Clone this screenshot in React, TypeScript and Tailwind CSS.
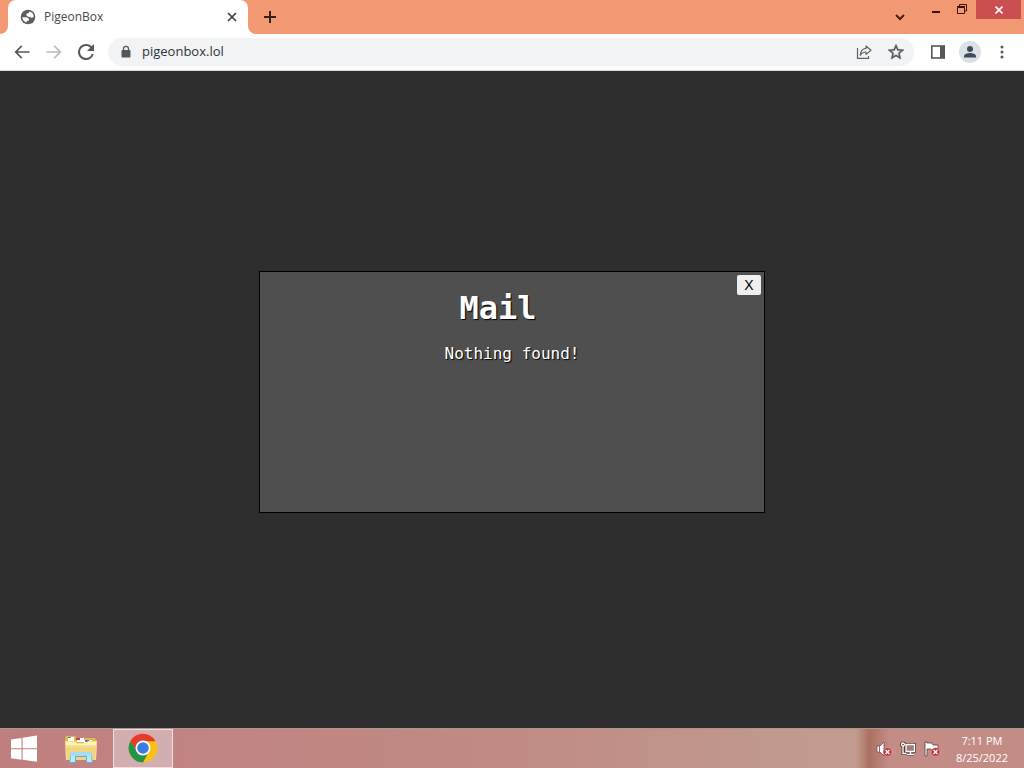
import React from "react";

const iconButton = "flex shrink-0 items-center justify-center";

function TabStrip() {
  return (
    <header className="flex h-[34px] items-start bg-[#f29973] pl-2">
      <div className="relative flex h-[34px] w-60 items-center rounded-t-lg bg-white pr-2 pl-3">
        <svg className="absolute bottom-0 -left-2 size-2" viewBox="0 0 8 8" fill="#fff" aria-hidden="true">
          <path d="M8 0v8H0a8 8 0 0 0 8-8z" />
        </svg>
        <svg className="absolute -right-2 bottom-0 size-2" viewBox="0 0 8 8" fill="#fff" aria-hidden="true">
          <path d="M0 0v8h8a8 8 0 0 1-8-8z" />
        </svg>
        <svg className="size-4" viewBox="0 0 16 16" aria-hidden="true">
          <circle cx="8" cy="8" r="7.300" fill="#5a5e62" />
          <path d="M2.300 8.300h3.500c2.400 0 3.500 1.200 3.200 3.500H6.700v1.700C4 13 2.300 10.800 2.300 8.300z" fill="#fff" />
          <path d="M9.500 2.500c2.600.7 4.200 2.800 4.300 5.300-.7 1-1.700 1.200-2.600.9C10.500 7.500 9.300 8 8.200 7.700 6.800 7.200 6 6 6.400 5.200c.6-1 1.700-.6 2.300-1.100z" fill="#fff" />
        </svg>
        <span className="ml-2 flex-1 text-xs text-[#45494d]">PigeonBox</span>
        <button type="button" aria-label="Close tab" className={`${iconButton} size-4`}>
          <svg className="size-2.5" viewBox="0 0 10 10" stroke="#3c4043" strokeWidth="1.7" aria-hidden="true">
            <path d="M1 1l8 8M9 1l-8 8" />
          </svg>
        </button>
      </div>
      <button type="button" aria-label="New tab" className={`${iconButton} ml-2 h-[34px] w-7`}>
        <svg className="size-3" viewBox="0 0 12 12" stroke="#35221b" strokeWidth="2" aria-hidden="true">
          <path d="M6 0v12M0 6h12" />
        </svg>
      </button>
      <div className="ml-auto flex items-start pr-[3px]">
        <button type="button" aria-label="Search tabs" className={`${iconButton} mr-3 h-[34px] w-6`}>
          <svg className="size-2.5" viewBox="0 0 10 10" fill="none" stroke="#4a1d12" strokeWidth="2" aria-hidden="true">
            <path d="M1 3l4 4 4-4" />
          </svg>
        </button>
        <button type="button" aria-label="Minimize" className={`${iconButton} h-5 w-[26px]`}>
          <svg className="size-3" viewBox="0 0 12 12" fill="#3b1509" aria-hidden="true">
            <path d="M1 7h8v2H1z" />
          </svg>
        </button>
        <button type="button" aria-label="Restore" className={`${iconButton} h-5 w-[26px]`}>
          <svg className="size-3" viewBox="0 0 12 12" fill="none" stroke="#3b1509" aria-hidden="true">
            <path d="M.5 3.500h7v6h-7zM0 2.500h8M2.500 2V.500h7v6.500H8" />
          </svg>
        </button>
        <button type="button" aria-label="Close window" className={`${iconButton} h-[19px] w-[45px] bg-[#cb4f50]`}>
          <svg className="size-2" viewBox="0 0 8 8" stroke="#fff" strokeWidth="1.600" aria-hidden="true">
            <path d="M.5.5l7 7M7.500.5l-7 7" />
          </svg>
        </button>
      </div>
    </header>
  );
}

function Toolbar() {
  return (
    <nav className="flex h-[37px] items-center border-b border-[#d5d7d9] bg-white pr-1.5 pl-1.5">
      <button type="button" aria-label="Back" className={`${iconButton} size-8`}>
        <svg className="size-5" viewBox="0 0 24 24" fill="#54585c" aria-hidden="true">
          <path d="M21 11H6.800l5.600-5.600L11 4l-8 8 8 8 1.400-1.400L6.800 13H21z" />
        </svg>
      </button>
      <button type="button" aria-label="Forward" className={`${iconButton} size-8`}>
        <svg className="size-5" viewBox="0 0 24 24" fill="#bbbdbf" aria-hidden="true">
          <path d="M3 11h14.200l-5.600-5.600L13 4l8 8-8 8-1.400-1.400 5.600-5.600H3z" />
        </svg>
      </button>
      <button type="button" aria-label="Reload" className={`${iconButton} size-8`}>
        <svg className="size-4" viewBox="4 4 16 16" fill="#54585c" aria-hidden="true">
          <path d="M17.650 6.350A7.958 7.958 0 0 0 12 4a8 8 0 1 0 7.730 10h-2.080A5.990 5.990 0 0 1 12 18a6 6 0 1 1 0-12c1.660 0 3.140.69 4.220 1.780L13 11h7V4z" />
        </svg>
      </button>
      <div className="ml-1.5 flex h-7 flex-1 items-center rounded-full bg-[#f1f3f4] pr-0.5 pl-3">
        <svg className="h-3.5 w-3" viewBox="0 0 12 14" aria-hidden="true">
          <rect x="1.500" y="5" width="9" height="7.500" rx="1" fill="#54585c" />
          <path d="M3.500 6V3.800a2.500 2.500 0 0 1 5 0V6" fill="none" stroke="#54585c" strokeWidth="1.300" />
        </svg>
        <input
          type="text"
          aria-label="Address"
          defaultValue="pigeonbox.lol"
          className="ml-2.5 min-w-0 flex-1 bg-transparent text-[13px] text-[#303438] outline-none"
        />
        <button type="button" aria-label="Share" className={`${iconButton} size-8`}>
          <svg className="size-4" viewBox="0 0 16 16" fill="none" stroke="#5f6368" strokeWidth="1.200" strokeLinejoin="round" aria-hidden="true">
            <path d="M1.500 4v10.400h11V12" />
            <path d="M10 2l5 4.200-5 4.200V8C7.500 8 5.500 9 4.300 11.300 4.500 7.500 6.500 4.800 10 4.400z" />
          </svg>
        </button>
        <button type="button" aria-label="Bookmark" className={`${iconButton} size-8`}>
          <svg className="size-4" viewBox="2 2 20 20" fill="#54585c" stroke="#54585c" strokeWidth=".5" aria-hidden="true">
            <path d="M22 9.240l-7.190-.62L12 2 9.190 8.630 2 9.240l5.460 4.730L5.820 21 12 17.270 18.180 21l-1.630-7.030L22 9.240zM12 15.400l-3.760 2.270 1-4.280-3.320-2.880 4.380-.38L12 6.100l1.710 4.040 4.380.38-3.320 2.880 1 4.280L12 15.400z" />
          </svg>
        </button>
      </div>
      <button type="button" aria-label="Side panel" className={`${iconButton} ml-2 size-8`}>
        <svg className="size-3.5" viewBox="0 0 14 14" aria-hidden="true">
          <rect x=".8" y="1" width="12.400" height="12" fill="#fff" stroke="#54585c" strokeWidth="1.600" />
          <path d="M9 1h4v12H9z" fill="#54585c" />
        </svg>
      </button>
      <button type="button" aria-label="Profile" className={`${iconButton} size-8`}>
        <svg className="size-[22px]" viewBox="0 0 22 22" aria-hidden="true">
          <circle cx="11" cy="11" r="11" fill="#dce1e6" />
          <circle cx="11" cy="8" r="3" fill="#3f4b57" />
          <path d="M5 16.500v-1.200c0-2.300 3.600-3.300 6-3.300s6 1 6 3.300v1.200z" fill="#3f4b57" />
        </svg>
      </button>
      <button type="button" aria-label="Menu" className={`${iconButton} size-8`}>
        <svg className="h-3.5 w-1" viewBox="0 0 4 14" fill="#54585c" aria-hidden="true">
          <circle cx="2" cy="2" r="1.500" />
          <circle cx="2" cy="7" r="1.500" />
          <circle cx="2" cy="12" r="1.500" />
        </svg>
      </button>
    </nav>
  );
}

function MailPanel() {
  return (
    <section className="relative flex h-[242px] w-[506px] max-w-full flex-col items-center border border-black bg-[#4f4f4f] pt-[18px] font-['DejaVu_Sans_Mono',monospace] text-white [text-shadow:1px_1px_1px_#000]">
      <button
        type="button"
        aria-label="Close mail"
        className="absolute top-[3px] right-[3px] flex h-5 w-6 items-center justify-center rounded-xs bg-[#efefef] font-['Liberation_Sans',sans-serif] text-sm text-black [text-shadow:none]"
      >
        X
      </button>
      <h1 className="pr-7 text-[32px] leading-9 font-bold">Mail</h1>
      <p className="mt-4 text-base leading-6">Nothing found!</p>
    </section>
  );
}

function ErrorBadge() {
  return (
    <g>
      <circle cx="11.500" cy="11" r="4.300" fill="#c8323c" stroke="#e5a5a3" strokeWidth=".5" />
      <path d="M9.600 9.100l3.800 3.800M13.400 9.100l-3.800 3.800" stroke="#fff" strokeWidth="1.400" />
    </g>
  );
}

function Taskbar() {
  return (
    <footer className="flex h-10 items-stretch border-t border-[#ad9690] bg-linear-to-r from-[#c07f7f] via-[#c08b85] to-[#c19b8e] to-80%">
      <button type="button" aria-label="Start" className={`${iconButton} w-12`}>
        <svg className="size-7" viewBox="0 0 28 28" fill="#fff" aria-hidden="true">
          <path d="M1 4.600l10.500-1.700v10.300H1zM12.600 2.700L27 .5v12.700H12.600zM1 14.300h10.500v10.400L1 23.200zM12.600 14.300H27v12.500l-14.400-2z" />
        </svg>
      </button>
      <button type="button" aria-label="File Explorer" className={`${iconButton} ml-[3px] w-[60px]`}>
        <svg className="h-[30px] w-[34px]" viewBox="0 0 34 30" aria-hidden="true">
          <path d="M1 4l1-2h9l2 2h18l2 3-1 19H2z" fill="#ddb75c" />
          <path d="M4 3h6v4H4zM13 4h7v4h-7zM20 6h8v4h-8z" fill="#fff" />
          <path d="M4 3h3v1H4z" fill="#49a354" />
          <path d="M12 4h4v2h-4z" fill="#c24a3e" />
          <path d="M21 6h4v2h-4z" fill="#4281bd" />
          <path d="M1 7h10l3 2h8l2-2h9l-1 19H2z" fill="#f6df91" />
          <path d="M2 13h30l-1 13H3z" fill="#f0d680" />
          <path d="M2 8h8l3 2h9l3-2h7v3H2z" fill="#fff2b4" />
          <path d="M5 29l2-11h20l2 11h-7v-6H12v6z" fill="#62ade0" />
          <path d="M7 18h20l1 4H6z" fill="#a7dcf2" />
          <path d="M6 28l1-6h4v6zM23 28v-6h4l1 6z" fill="#bce9f8" />
        </svg>
      </button>
      <button type="button" aria-label="Google Chrome" className={`${iconButton} ml-0.5 w-[60px] border border-[#f0dfde] bg-[#d2aeb0] pb-0.5`}>
        <svg className="size-[30px]" viewBox="0 0 48 48" aria-hidden="true">
          <circle cx="24" cy="24" r="23" fill="#fbc116" />
          <path d="M24 13h19.920A23 23 0 0 0 4.080 12.500L14.470 29.500 24 13z" fill="#e33b2e" />
          <path d="M4.080 12.500A23 23 0 0 0 24 47l9.530-17.500L24 35l-9.530-5.500z" fill="#269447" />
          <circle cx="24" cy="24" r="12" fill="#fff" />
          <circle cx="24" cy="24" r="9.300" fill="#397de2" />
        </svg>
      </button>
      <div className="ml-auto flex items-center bg-linear-to-r from-[#b07769]/0 via-[#ab7060] via-8% to-[#c38c86] to-20% pr-4 pl-4">
        <button type="button" aria-label="Volume muted" className={`${iconButton} w-6`}>
          <svg className="size-4" viewBox="0 0 16 16" aria-hidden="true">
            <path d="M1 5h3l4-4v14l-4-4H1z" fill="#fff" stroke="#66443f" strokeWidth=".7" />
            <path d="M3.500 5v6" stroke="#8d6b64" />
            <ErrorBadge />
          </svg>
        </button>
        <button type="button" aria-label="Network" className={`${iconButton} w-6`}>
          <svg className="size-4" viewBox="0 0 16 16" fill="none" aria-hidden="true">
            <g stroke="#543b36" strokeWidth="3">
              <path d="M6 3.500h8.500v7H6zM10.500 10.500v3M7 13.500h7M3 5v7.500h3" />
              <circle cx="3" cy="3.500" r="1.500" />
            </g>
            <path d="M6 3.500h8.500v7H6z" fill="#a17c75" />
            <g stroke="#fff" strokeWidth="1.300">
              <path d="M6 3.500h8.500v7H6zM10.500 10.500v3M7 13.500h7M3 5v7.500h3" />
              <circle cx="3" cy="3.500" r="1.500" />
            </g>
          </svg>
        </button>
        <button type="button" aria-label="Action Center" className={`${iconButton} w-6`}>
          <svg className="size-4" viewBox="0 0 16 16" aria-hidden="true">
            <path d="M1 1h2v1h5l1 2h5v6H8L7 8H3v7H1z" fill="#fff" stroke="#57403a" strokeWidth=".8" />
            <ErrorBadge />
          </svg>
        </button>
        <time dateTime="2022-08-25T19:11" className="ml-3 text-center text-[11px] leading-[17px] text-white">
          7:11 PM
          <br />
          8/25/2022
        </time>
      </div>
    </footer>
  );
}

export default function App() {
  return (
    <div className="flex min-h-screen flex-col bg-[#2d2d2d] font-['Open_Sans',sans-serif]">
      <TabStrip />
      <Toolbar />
      <main className="flex flex-1 items-center justify-center pb-4">
        <MailPanel />
      </main>
      <Taskbar />
    </div>
  );
}
